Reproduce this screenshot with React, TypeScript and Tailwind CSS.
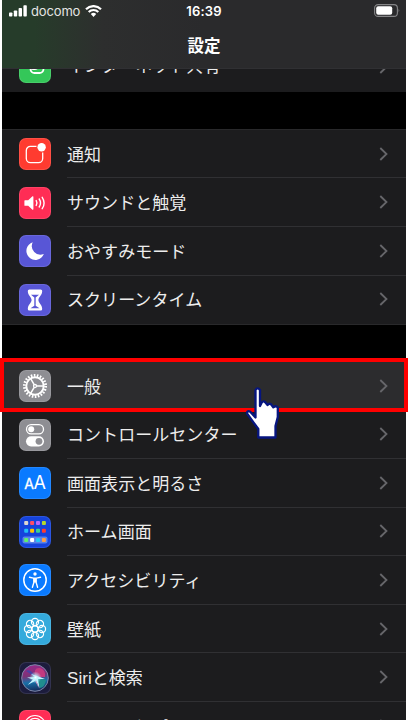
import React from "react";

const JP = "font-['Inter','Noto_Sans_CJK_JP',sans-serif]";

function Chevron() {
  return (
    <svg width="10" height="14" viewBox="0 0 10 14" className="mr-[17px] shrink-0" fill="none" stroke="#66666a" strokeWidth="1.8">
      <path d="M1.3 1l6.2 6-6.2 6" />
    </svg>
  );
}

function Tile({ bg, children }: { bg: string; children: React.ReactNode }) {
  return (
    <svg width="32" height="32" viewBox="0 0 32 32" className={`ml-[17px] shrink-0 rounded-[7px] ring-1 ring-inset ring-white/10 ${bg}`} fill="none" stroke="#fff">
      {children}
    </svg>
  );
}

const Hotspot = () => (
  <Tile bg="bg-[#34c759]">
    <rect x="10" y="9" width="10" height="9" rx="4" strokeWidth="1.8" />
    <rect x="11.5" y="12.5" width="13" height="9.5" rx="4" strokeWidth="1.8" />
  </Tile>
);

const Notice = () => (
  <Tile bg="bg-[#ff3b30]">
    <path d="M17.5 8.3h-6a4.2 4.2 0 0 0-4.2 4.2v8a4.2 4.2 0 0 0 4.2 4.2h8a4.2 4.2 0 0 0 4.2-4.2v-6" strokeWidth="1.3" />
    <circle cx="22.6" cy="9.2" r="4.2" fill="#fff" stroke="none" />
  </Tile>
);

const Sound = () => (
  <Tile bg="bg-[#ff2d55]">
    <path d="M6 13.2h3.2l4-3.8a.7.7 0 0 1 1.2.5v12.2a.7.7 0 0 1-1.2.5l-4-3.8H6a.6.6 0 0 1-.6-.6v-4.4a.6.6 0 0 1 .6-.6z" fill="#fff" stroke="none" />
    <path d="M17.2 13.6q1.5 2.4 0 4.8M20.2 12q2.6 4 0 8M23.2 10.3q3.8 5.7 0 11.4" strokeWidth="1.4" strokeLinecap="round" />
  </Tile>
);

const Moon = () => (
  <Tile bg="bg-[#5856d6]">
    <path d="M13.7 7.3a9 9 0 1 0 11.1 11.8A8.7 8.7 0 0 1 13.7 7.3z" fill="#fff" stroke="none" />
  </Tile>
);

const Hourglass = () => (
  <Tile bg="bg-[#5856d6]">
    <path d="M10.3 5.5h11.4a1.5 1.5 0 0 1 1.5 1.5c0 4.5-3.8 6-3.8 9s3.8 4.5 3.8 9a1.5 1.5 0 0 1-1.5 1.5H10.3A1.5 1.5 0 0 1 8.8 25c0-4.5 3.8-6 3.8-9S8.8 11.5 8.8 7a1.5 1.5 0 0 1 1.5-1.5z" fill="#fff" stroke="none" />
    <path d="M12 10.8h8l-3.3 2.7v8.2l3.8 2.5h-9l3.8-2.5v-8.2z" fill="#5856d6" stroke="none" />
  </Tile>
);

const Gear = () => (
  <Tile bg="bg-[#8e8e93]">
    <circle cx="16" cy="16" r="10.6" strokeWidth="2.8" strokeDasharray="1.6 1.427" />
    <circle cx="16" cy="16" r="8.7" strokeWidth="1.9" />
    <circle cx="16" cy="16" r="1.5" strokeWidth="1.3" />
    <path d="M17.5 16h7M15.2 14.7l-3.7-6.4M15.2 17.3l-3.7 6.4" strokeWidth="1.5" />
  </Tile>
);

const Control = () => (
  <Tile bg="bg-[#8e8e93]">
    <rect x="7.5" y="5.6" width="17" height="9.2" rx="4.6" strokeWidth="1.3" />
    <circle cx="12.2" cy="10.2" r="3" fill="#fff" stroke="none" />
    <rect x="7" y="17.2" width="18" height="10.2" rx="5.1" fill="#fff" stroke="none" />
    <circle cx="20" cy="22.3" r="3.4" fill="#8e8e93" stroke="none" />
  </Tile>
);

const Display = () => (
  <Tile bg="bg-[#0a7aff]">
    <text x="5.3" y="22" fontSize="14" fill="#fff" strokeWidth=".3">A</text>
    <text x="14.4" y="22" fontSize="18" fill="#fff" stroke="none">A</text>
  </Tile>
);

const dots = ["#ddd6d0", "#ff4e63", "#b666fa", "#b5d930", "#20baf5", "#ffc400", "#38d391", "#ff3b30", "#5df06c", "#ffffff", "#24c8f5", "#ff9f43"];
const Home = () => (
  <Tile bg="bg-[#1543dc]">
    <rect x="3.5" y="20.5" width="25" height="7" rx="2" fill="#5a83e8" stroke="none" />
    {dots.map((c, i) => (
      <rect key={i} x={5.2 + (i % 4) * 5.9} y={[5, 12.7, 22][Math.floor(i / 4)]} width="4" height="4" rx="1" fill={c} stroke="none" />
    ))}
  </Tile>
);

const Access = () => (
  <Tile bg="bg-[#0a7aff]">
    <circle cx="16" cy="16" r="11.2" strokeWidth="1.5" />
    <circle cx="16" cy="10" r="1.7" fill="#fff" stroke="none" />
    <path d="M10.5 13.3l4 .8h3l4-.8M14.9 14.5v4l-1.5 4.8M17.1 14.5v4l1.5 4.8" strokeWidth="1.4" strokeLinecap="round" />
    <path d="M14.5 14h3v4.5h-3z" fill="#fff" stroke="none" />
  </Tile>
);

const Wallpaper = () => (
  <Tile bg="bg-[#34aadc]">
    {[0, 45, 90, 135, 180, 225, 270, 315].map((a) => (
      <circle key={a} cx="16" cy="9" r="3.6" strokeWidth="1.2" transform={`rotate(${a} 16 16)`} />
    ))}
    <circle cx="16" cy="16" r="3" strokeWidth="1.1" />
  </Tile>
);

const Siri = () => (
  <Tile bg="bg-[#1c1c3d]">
    <defs>
      <linearGradient id="siri" x1=".35" y1="0" x2=".5" y2="1">
        <stop offset="0" stopColor="#9a2a8b" />
        <stop offset=".4" stopColor="#7c3277" />
        <stop offset=".65" stopColor="#1770a8" />
        <stop offset="1" stopColor="#162958" />
      </linearGradient>
      <radialGradient id="glow">
        <stop offset="0" stopColor="#fff" />
        <stop offset=".4" stopColor="#baf5ff" stopOpacity=".7" />
        <stop offset="1" stopColor="#baf5ff" stopOpacity="0" />
      </radialGradient>
    </defs>
    <circle cx="16" cy="16" r="13.3" fill="url(#siri)" stroke="#7d86a8" strokeWidth="1" />
    <path d="M16 15L7 9q5-3 9 6z" fill="#4b3fa5" stroke="none" />
    <path d="M16 15Q14 5 21 6q6 2 5 9z" fill="#c23a80" stroke="none" />
    <path d="M17 15l10 3q-1 7-6 8z" fill="#208d8e" stroke="none" />
    <path d="M16 15l-4-3 6 2 8 3-7 0 1.5 9.5-3.5-8-8.5 4.5 5.5-5.5-6-2z" fill="#c8f4ff" stroke="none" />
    <path d="M17 18l3 8.5-3.5-7z" fill="#ff8fc0" stroke="none" />
    <circle cx="16.5" cy="15.5" r="6" fill="url(#glow)" stroke="none" />
  </Tile>
);

const Touch = () => (
  <Tile bg="bg-[#ff2d55]">
    {[10.5, 7.7, 5, 2].map((r) => (
      <circle key={r} cx="16" cy="16" r={r} strokeWidth="1.2" />
    ))}
  </Tile>
);

type RowProps = { icon: React.ReactNode; label: string; last?: boolean; active?: boolean; nudge?: string };

function Row({ icon, label, last, active, nudge = "pt-1" }: RowProps) {
  return (
    <div className={`flex h-[48.55px] shrink-0 items-center ${active ? "bg-[#2c2c2e]" : "bg-[#1c1c1e]"}`}>
      {icon}
      <div className={`ml-4 flex h-full flex-1 items-center justify-between border-b ${last ? "border-transparent" : "border-[#303033]"}`}>
        <span className={`whitespace-nowrap font-['Liberation_Sans','Noto_Sans_CJK_JP',sans-serif] text-[17px] leading-6 tracking-[0.05px] text-[#ededed] ${nudge}`}>{label}</span>
        <Chevron />
      </div>
    </div>
  );
}

function Header() {
  return (
    <header className="relative z-10 h-[69px] shrink-0 border-b border-[#303033] bg-[#2a2a2c] bg-linear-to-r from-[#263c2a] from-8% via-[#2d2e2e] via-25% to-[#2a2a2c] to-50% text-white">
      <div className="grid h-[22px] grid-cols-3 items-center">
        <div className="flex items-center pl-[7px]">
          <svg width="18" height="12" viewBox="0 0 18 12" fill="#fff">
            <rect y="7.5" width="3.4" height="4" rx=".8" />
            <rect x="4.8" y="5.5" width="3.4" height="6" rx=".8" />
            <rect x="9.6" y="3" width="3.4" height="8.5" rx=".8" />
            <rect x="14.4" y=".3" width="3.4" height="11.2" rx=".8" />
          </svg>
          <span className="ml-1 text-[13px] leading-4 tracking-[-0.15px] text-[#e4e6e4]">docomo</span>
          <svg width="17" height="12" viewBox="0 0 17 12" className="ml-[5px]" fill="none" stroke="#fff" strokeWidth="2.2">
            <path d="M1 4.2a10.6 10.6 0 0 1 15 0M3.7 7a6.8 6.8 0 0 1 9.6 0" />
            <path d="M8.5 12L5.8 9.1a3.8 3.8 0 0 1 5.4 0z" fill="#fff" stroke="none" />
          </svg>
        </div>
        <span className="text-center text-[13px] font-semibold leading-4 tracking-[0.2px]">16:39</span>
        <svg width="26" height="13" viewBox="0 0 26 13" className="mb-px mr-[6px] justify-self-end">
          <rect x=".6" y=".6" width="22.8" height="11.8" rx="3.5" fill="none" stroke="#858587" strokeWidth="1.1" />
          <rect x="2.2" y="2.2" width="16" height="8.6" rx="2" fill="#fff" />
          <path d="M24.6 4.6q1.4 1.9 0 3.8z" fill="#858587" />
        </svg>
      </div>
      <h1 className="mt-3 text-center text-[16.5px] font-bold leading-6">設定</h1>
    </header>
  );
}

export default function App() {
  return (
    <div className={`relative h-[720px] w-[408px] overflow-hidden bg-white px-[2px] ${JP}`}>
      <main className="flex h-full flex-col overflow-hidden bg-black">
        <Header />
        <section className="-mt-[26px] shrink-0">
          <Row icon={<Hotspot />} label="インターネット共有" last nudge="pt-px" />
        </section>
        <section className="mt-[37.4px] shrink-0 border-y border-[#29292b]">
          <Row icon={<Notice />} label="通知" />
          <Row icon={<Sound />} label="サウンドと触覚" />
          <Row icon={<Moon />} label="おやすみモード" />
          <Row icon={<Hourglass />} label="スクリーンタイム" last />
        </section>
        <section className="mt-[36.9px] shrink-0">
          <Row icon={<Gear />} label="一般" active />
          <Row icon={<Control />} label="コントロールセンター" />
          <Row icon={<Display />} label="画面表示と明るさ" />
          <Row icon={<Home />} label="ホーム画面" />
          <Row icon={<Access />} label="アクセシビリティ" />
          <Row icon={<Wallpaper />} label="壁紙" />
          <Row icon={<Siri />} label="Siriと検索" />
          <Row icon={<Touch />} label="Touch IDとパスコード" nudge="pt-1" />
        </section>
      </main>
      <div className="absolute left-0 top-[358px] h-[54px] w-[408px] border-4 border-[#ff0000]" />
      <svg className="absolute left-[244px] top-[386px]" width="36" height="56" viewBox="0 0 36 56">
        <path d="M11.5 4q2-3.200 4.500 0V20l1.500-3q1.500-2.500 3.500-1l2.500 3q1.500-2 3.500-.8l2.300 3q3-2 4.500.3V31l-2.300 9v11.500H14.300V43L3 27.500q-.3-3 3-2l5.500 6z" fill="#fff" stroke="#061580" strokeWidth="2.3" strokeLinejoin="round" />
      </svg>
    </div>
  );
}
